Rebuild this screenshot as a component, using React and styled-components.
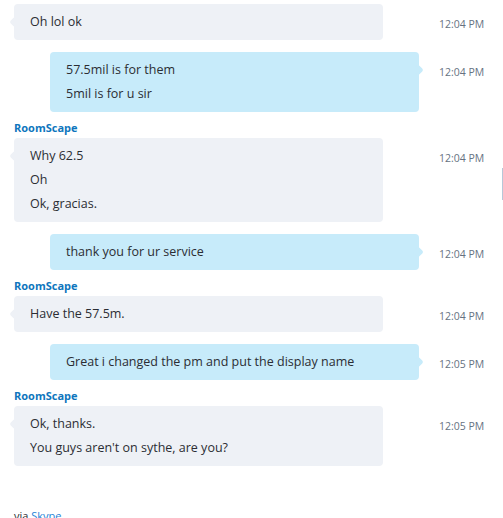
import React from "react";
import styled, { createGlobalStyle } from "styled-components";

const COLORS = {
  TEXT: "#2b2d33",
  TIME: "#667282",
  NAME: "#0e76bd",
  LINK: "#1a82d6",
  INCOMING: "#eef1f6",
  OUTGOING: "#c7ebfa",
};

const GlobalStyle = createGlobalStyle`
  html, body {
    margin: 0;
    padding: 0;
    background: #ffffff;
    overflow: hidden;
  }
  body {
    font-family: "Open Sans", "Noto Sans", sans-serif;
    color: ${COLORS.TEXT};
  }
`;

const Styled = {
  Page: styled.div`
    position: relative;
    width: 503px;
    height: 518px;
    overflow: hidden;
    box-sizing: border-box;
    padding: 4px 0 0 14px;
  `,
  Feed: styled.div`
    display: flex;
    flex-direction: column;
    gap: 12px;
  `,
  Name: styled.div`
    font-size: 11px;
    font-weight: 700;
    line-height: 14px;
    color: ${COLORS.NAME};
    margin: -3px 0 -9px;
  `,
  Row: styled.div`
    display: flex;
    align-items: flex-start;
  `,
  Lane: styled.div`
    width: 405px;
    display: flex;
    justify-content: ${(p) => (p.$out ? "flex-end" : "flex-start")};
  `,
  Bubble: styled.div`
    position: relative;
    width: 369px;
    box-sizing: border-box;
    padding: 6px 16px;
    border-radius: 4px;
    background: ${(p) => (p.$out ? COLORS.OUTGOING : COLORS.INCOMING)};
    font-size: 12.5px;
    line-height: 24px;

    &::before {
      content: "";
      position: absolute;
      top: 14px;
      ${(p) => (p.$out ? "right: -3px;" : "left: -3px;")}
      width: 8px;
      height: 8px;
      border-radius: 2px;
      background: inherit;
      transform: rotate(45deg);
    }
  `,
  Line: styled.div`
    white-space: nowrap;
  `,
  Time: styled.div`
    margin-left: 20px;
    padding-top: 8px;
    font-size: 10.5px;
    line-height: 24px;
    color: ${COLORS.TIME};
    white-space: nowrap;
  `,
  Via: styled.div`
    margin-top: 43px;
    font-size: 11px;
    line-height: 14px;
    color: ${COLORS.TEXT};
    a {
      color: ${COLORS.LINK};
      text-decoration: none;
    }
  `,
  ScrollMark: styled.div`
    position: absolute;
    right: 0;
    top: 168px;
    width: 1px;
    height: 32px;
    background: #b7c7d8;
  `,
};

const messages = [
  { out: false, lines: ["Oh lol ok"], time: "12:04 PM" },
  { out: true, lines: ["57.5mil is for them", "5mil is for u sir"], time: "12:04 PM" },
  { out: false, name: "RoomScape", lines: ["Why 62.5", "Oh", "Ok, gracias."], time: "12:04 PM" },
  { out: true, lines: ["thank you for ur service"], time: "12:04 PM" },
  { out: false, name: "RoomScape", lines: ["Have the 57.5m."], time: "12:04 PM" },
  { out: true, lines: ["Great i changed the pm and put the display name"], time: "12:05 PM" },
  { out: false, name: "RoomScape", lines: ["Ok, thanks.", "You guys aren't on sythe, are you?"], time: "12:05 PM" },
];

const App = () => {
  return (
    <>
      <GlobalStyle />
      <Styled.Page>
        <Styled.Feed>
          {messages.map((m, i) => (
            <React.Fragment key={i}>
              {m.name && <Styled.Name>{m.name}</Styled.Name>}
              <Styled.Row>
                <Styled.Lane $out={m.out}>
                  <Styled.Bubble $out={m.out}>
                    {m.lines.map((l, j) => (
                      <Styled.Line key={j}>{l}</Styled.Line>
                    ))}
                  </Styled.Bubble>
                </Styled.Lane>
                <Styled.Time>{m.time}</Styled.Time>
              </Styled.Row>
            </React.Fragment>
          ))}
        </Styled.Feed>
        <Styled.Via>
          via <a href="#">Skype</a>
        </Styled.Via>
        <Styled.ScrollMark />
      </Styled.Page>
    </>
  );
};

export default App;
